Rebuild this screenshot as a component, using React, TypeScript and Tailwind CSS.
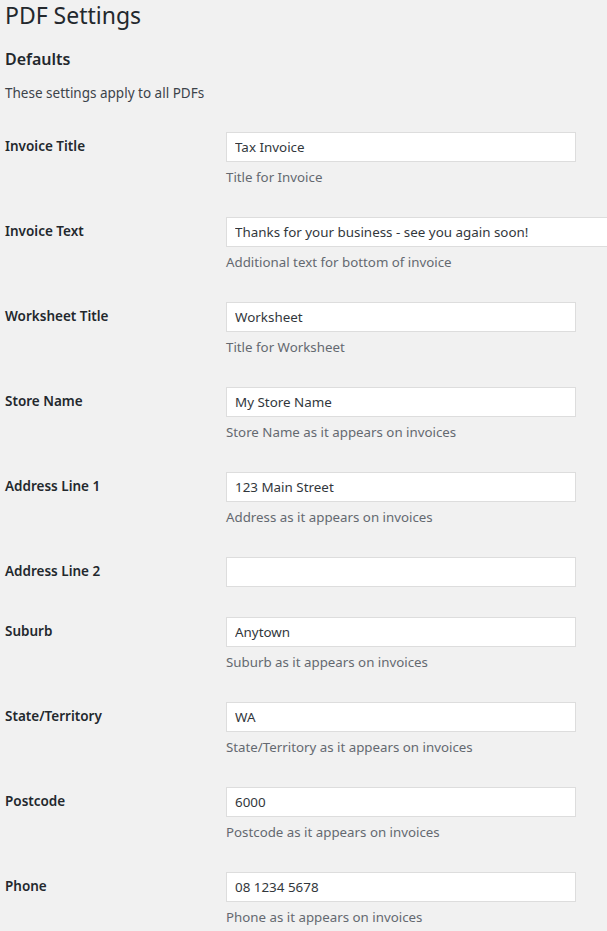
import React from "react";

type Field = {
  label: string;
  value: string;
  help?: string;
  wide?: boolean;
};

const fields: Field[] = [
  { label: "Invoice Title", value: "Tax Invoice", help: "Title for Invoice" },
  {
    label: "Invoice Text",
    value: "Thanks for your business - see you again soon!",
    help: "Additional text for bottom of invoice",
    wide: true,
  },
  { label: "Worksheet Title", value: "Worksheet", help: "Title for Worksheet" },
  { label: "Store Name", value: "My Store Name", help: "Store Name as it appears on invoices" },
  { label: "Address Line 1", value: "123 Main Street", help: "Address as it appears on invoices" },
  { label: "Address Line 2", value: "" },
  { label: "Suburb", value: "Anytown", help: "Suburb as it appears on invoices" },
  { label: "State/Territory", value: "WA", help: "State/Territory as it appears on invoices" },
  { label: "Postcode", value: "6000", help: "Postcode as it appears on invoices" },
  { label: "Phone", value: "08 1234 5678", help: "Phone as it appears on invoices" },
];

const Row = ({ label, value, help, wide }: Field) => {
  return (
    <div className="grid grid-cols-[221px_1fr]">
      <div className="pt-[19px] pb-5 text-[13.5px] font-semibold leading-[21px] text-[#23282d]">
        {label}
      </div>
      <div className="py-[15px]">
        <input
          type="text"
          defaultValue={value}
          className={
            "block h-[30px] border border-[#dddddd] bg-white px-2 text-[13.4px] text-[#32373c] outline-none " +
            (wide ? "w-[500px]" : "w-[350px]")
          }
        />
        {help && (
          <p className="mt-[5px] text-[13.3px] leading-[20px] text-[#646970]">{help}</p>
        )}
      </div>
    </div>
  );
};

export default function App() {
  return (
    <div
      className="h-screen w-full overflow-hidden bg-[#f1f1f1] pl-[5px]"
      style={{ fontFamily: '"Noto Sans", "Open Sans", sans-serif' }}
    >
      <h1 className="pt-[1px] text-[23px] leading-[29px] text-[#23282d]">PDF Settings</h1>
      <h2 className="mt-[17px] text-[16px] font-semibold leading-[24px] text-[#23282d]">Defaults</h2>
      <p className="mt-[12px] text-[13.5px] leading-[20px] text-[#3c434a]">
        These settings apply to all PDFs
      </p>
      <div className="mt-[14px]">
        {fields.map((f) => (
          <Row key={f.label} {...f} />
        ))}
      </div>
    </div>
  );
}
